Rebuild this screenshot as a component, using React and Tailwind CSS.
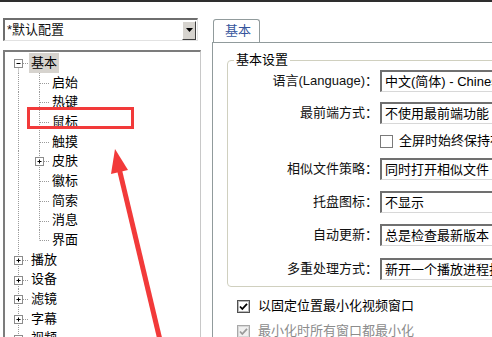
import React from 'react'

const ROW = 19.7

// tree connector cell: dotted lines plus optional +/- box
function Guide({ w, lineX, vert = 'full', horiz, box, boxX }) {
    const mid = 10.5
    return (
        <svg width={w} height={ROW} className="block shrink-0">
            {vert !== 'none' && (
                <line x1={lineX} x2={lineX} y1={vert === 'bottom' ? mid : 0} y2={vert === 'top' ? mid : ROW}
                    stroke="#9a9a9a" strokeDasharray="1 1" />
            )}
            {horiz && <line x1={horiz[0]} x2={horiz[1]} y1={mid} y2={mid} stroke="#9a9a9a" strokeDasharray="1 1" />}
            {box && (
                <g>
                    <rect x={boxX + 0.5} y={mid - 4} width="8" height="8" fill="#fff" stroke="#8c8c8c" />
                    <line x1={boxX + 2.5} x2={boxX + 6.5} y1={mid} y2={mid} stroke="#000" />
                    {box === '+' && <line x1={boxX + 4.5} x2={boxX + 4.5} y1={mid - 2} y2={mid + 2} stroke="#000" />}
                </g>
            )}
        </svg>
    )
}

const children = ['启始', '热键', '鼠标', '触摸', '皮肤', '徽标', '简索', '消息', '界面']
const roots = ['播放', '设备', '滤镜', '字幕', '视频']

const settings = [
    { label: '语言(Language)：', value: '中文(简体) - Chinese', mt: 'mt-[2px]' },
    { label: '最前端方式：', value: '不使用最前端功能', mt: 'mt-[10px]' },
    { check: '全屏时始终保持在最前端' },
    { label: '相似文件策略：', value: '同时打开相似文件', mt: 'mt-[10px]' },
    { label: '托盘图标：', value: '不显示', mt: 'mt-[11px]' },
    { label: '自动更新：', value: '总是检查最新版本', mt: 'mt-[11px]' },
    { label: '多重处理方式：', value: '新开一个播放进程打开', mt: 'mt-[12px]' },
]

function Combo({ value }) {
    return (
        <div className="ml-[2px] w-[140px] h-[22px] shrink-0 flex items-center pl-[3px] whitespace-nowrap overflow-hidden bg-white border-t-2 border-l-2 border-t-[#707070] border-l-[#707070] border-b border-r border-b-[#d8d8d8] border-r-[#d8d8d8]">
            {value}
        </div>
    )
}

function Check({ checked, disabled }) {
    return (
        <svg width="13" height="13" className="block shrink-0">
            <rect x="0.5" y="0.5" width="12" height="12" fill={disabled ? '#f0f0f0' : '#fff'} stroke={disabled ? '#a8a8a8' : '#505050'} />
            <rect x="1.5" y="1.5" width="10" height="10" fill="none" stroke={disabled ? '#d8d8d8' : '#b8b8b8'} />
            {checked && <path d="M3 6.5 L5.3 9 L10 3.8" fill="none" stroke={disabled ? '#9a9a9a' : '#000'} strokeWidth="1.8" />}
        </svg>
    )
}

export default function App() {
    return (
        <div className="relative w-[492px] h-[337px] overflow-hidden bg-white text-[13px] leading-4 text-black font-['Liberation_Sans','Noto_Sans_CJK_SC',sans-serif]">
            <div className="h-[2px] bg-[#2e2e2e]" />
            <div className="flex">
                {/* left: profile combo + tree */}
                <div className="w-[201px] shrink-0 pl-[3px] pt-[16px]">
                    <div className="w-[195px] h-[23px] flex items-center bg-white border-t-2 border-l-2 border-t-[#6e6e6e] border-l-[#6e6e6e] border-b border-r border-b-[#e2e2e2] border-r-[#e2e2e2]">
                        <span className="flex-1 pl-[2px] text-[#111]">*默认配置</span>
                        <div className="w-[14px] h-[19px] mr-px flex items-center justify-center bg-[#d6d3ce] border border-t-white border-l-white border-b-[#404040] border-r-[#404040]">
                            <svg width="7" height="4"><path d="M0 0 H7 L3.5 4 Z" fill="#000" /></svg>
                        </div>
                    </div>
                    <div className="mt-[9px] w-[198px] h-[300px] bg-white border-t-2 border-l-2 border-t-[#7c7c7c] border-l-[#7c7c7c] border-r border-r-[#c8c8c8] pt-px">
                        <div className="flex items-center">
                            <Guide w={24} lineX={13.5} vert="bottom" horiz={[18, 24]} box="-" boxX={9} />
                            <span className="h-[19.7px] flex items-center px-[2px] bg-[#d6d3ce]">基本</span>
                        </div>
                        {children.map((c, i) => (
                            <div key={c} className="flex items-center">
                                <Guide w={24} lineX={13.5} />
                                <Guide w={22} lineX={10.5} vert={i === children.length - 1 ? 'top' : 'full'}
                                    horiz={c === '皮肤' ? [15, 21] : [11, 21]} box={c === '皮肤' ? '+' : null} boxX={6} />
                                <span className="ml-px">{c}</span>
                            </div>
                        ))}
                        {roots.map((r) => (
                            <div key={r} className="flex items-center">
                                <Guide w={24} lineX={13.5} horiz={[18, 24]} box="+" boxX={9} />
                                <span className="px-[2px]">{r}</span>
                            </div>
                        ))}
                    </div>
                </div>

                {/* right: tab page */}
                <div className="flex-1 pl-[11px] pt-[17px]">
                    <div className="ml-px w-[47px] h-[23px] flex items-center pl-[11px] text-[#35559c] bg-white border border-b-0 border-[#919b9c] rounded-t-[3px]">基本</div>
                    <div className="h-[300px] border-t border-l border-[#919b9c] pl-[14px]">
                        <fieldset className="mt-[9px] w-[400px] border border-[#d0d0bf] rounded-[4px] pb-[6px]">
                            <legend className="ml-[6px] px-[2px] leading-4">基本设置</legend>
                            {settings.map((s) =>
                                s.check ? (
                                    <div key={s.check} className="mt-[10px] h-[14px] flex items-center pl-[152px] gap-[6px]">
                                        <svg width="13" height="13" className="block shrink-0">
                                            <rect x="0.5" y="0.5" width="12" height="12" fill="#fff" stroke="#7a7a7a" />
                                        </svg>
                                        <span className="whitespace-nowrap">{s.check}</span>
                                    </div>
                                ) : (
                                    <div key={s.label} className={`${s.mt} h-[22px] flex items-center`}>
                                        <span className="w-[150px] shrink-0 text-right whitespace-nowrap text-[#111]">{s.label}</span>
                                        <Combo value={s.value} />
                                    </div>
                                )
                            )}
                        </fieldset>
                        <div className="mt-[11px] ml-[10px] flex items-center gap-[8px]">
                            <Check checked />
                            <span>以固定位置最小化视频窗口</span>
                        </div>
                        <div className="mt-[9px] ml-[10px] flex items-center gap-[8px] text-[#8c8c8c]">
                            <Check checked disabled />
                            <span>最小化时所有窗口都最小化</span>
                        </div>
                    </div>
                </div>
            </div>

            {/* annotation overlay: red box and arrow */}
            <div className="absolute left-[27px] top-[107px] w-[107px] h-[22px] border-[3px] border-[#f23a3a]" />
            <svg className="absolute left-0 top-0 pointer-events-none" width="492" height="337">
                <polygon points="115,149 128,170 111,174" fill="#f23a3a" />
                <line x1="119.5" y1="170" x2="160" y2="340" stroke="#f23a3a" strokeWidth="5" />
            </svg>
        </div>
    )
}
